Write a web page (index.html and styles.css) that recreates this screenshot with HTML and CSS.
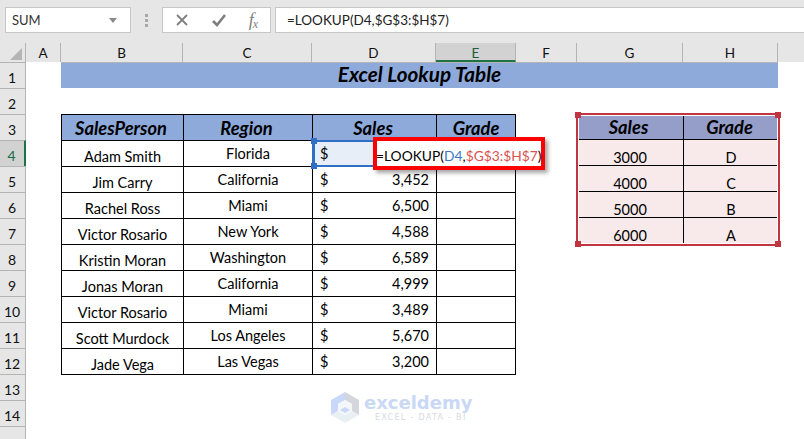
FILE: index.html
```html
<!DOCTYPE html>
<html lang="en">
<head>
<meta charset="utf-8">
<title>Excel Lookup Table</title>
<link rel="stylesheet" href="styles.css">
</head>
<body>
<div class="app">
  <header class="fbar">
    <div class="namebox"><span>SUM</span><svg class="caret" width="8" height="5" viewBox="0 0 8 5"><path d="M0 0h8L4 5z" fill="#8a8a8a"/></svg></div>
    <div class="grip"><i></i><i></i><i></i></div>
    <div class="btns">
      <svg width="14" height="14" viewBox="0 0 14 14"><path d="M2 2l10 10M12 2L2 12" stroke="#7f7f7f" stroke-width="1.8" fill="none"/></svg>
      <svg width="14" height="14" viewBox="0 0 14 14"><path d="M1 8l4 4 8-10" stroke="#7f7f7f" stroke-width="2.6" fill="none"/></svg>
      <span class="fx">f<sub>x</sub></span>
    </div>
    <div class="finput">=LOOKUP(D4,$G$3:$H$7)</div>
  </header>
  <main class="sheet">
    <div class="corner"><svg width="12" height="12" viewBox="0 0 12 12"><path d="M12 0v12H0z" fill="#b4b4b4"/></svg></div>
    <div class="col">A</div><div class="col">B</div><div class="col">C</div><div class="col">D</div><div class="col col-on">E</div><div class="col">F</div><div class="col">G</div><div class="col">H</div><div class="col-end"></div>

    <div class="row">1</div><div class="blank"></div><div class="title">Excel Lookup Table</div><div class="blank"></div>
    <div class="row">2</div><div class="blank full"></div>

    <div class="row">3</div><div class="blank"></div>
    <div class="th">SalesPerson</div><div class="th">Region</div><div class="th">Sales</div><div class="th last">Grade</div>
    <div class="blank"></div><div class="lh">Sales</div><div class="lh">Grade</div><div class="blank"></div>

    <div class="row row-on">4</div><div class="blank"></div>
    <div class="td name">Adam Smith</div><div class="td mid">Florida</div><div class="td money sel"><span>$</span></div><div class="td last"></div>
    <div class="blank"></div><div class="ld">3000</div><div class="ld">D</div><div class="blank"></div>

    <div class="row">5</div><div class="blank"></div>
    <div class="td name">Jim Carry</div><div class="td mid">California</div><div class="td money"><span>$</span><span>3,452</span></div><div class="td last"></div>
    <div class="blank"></div><div class="ld">4000</div><div class="ld">C</div><div class="blank"></div>

    <div class="row">6</div><div class="blank"></div>
    <div class="td name">Rachel Ross</div><div class="td mid">Miami</div><div class="td money"><span>$</span><span>6,500</span></div><div class="td last"></div>
    <div class="blank"></div><div class="ld">5000</div><div class="ld">B</div><div class="blank"></div>

    <div class="row">7</div><div class="blank"></div>
    <div class="td name">Victor Rosario</div><div class="td mid">New York</div><div class="td money"><span>$</span><span>4,588</span></div><div class="td last"></div>
    <div class="blank"></div><div class="ld lastl">6000</div><div class="ld lastl">A</div><div class="blank"></div>

    <div class="row">8</div><div class="blank"></div>
    <div class="td name">Kristin Moran</div><div class="td mid">Washington</div><div class="td money"><span>$</span><span>6,589</span></div><div class="td last"></div><div class="blank rest"></div>

    <div class="row">9</div><div class="blank"></div>
    <div class="td name">Jonas Moran</div><div class="td mid">California</div><div class="td money"><span>$</span><span>4,999</span></div><div class="td last"></div><div class="blank rest"></div>

    <div class="row">10</div><div class="blank"></div>
    <div class="td name">Victor Rosario</div><div class="td mid">Miami</div><div class="td money"><span>$</span><span>3,489</span></div><div class="td last"></div><div class="blank rest"></div>

    <div class="row">11</div><div class="blank"></div>
    <div class="td name">Scott Murdock</div><div class="td mid">Los Angeles</div><div class="td money"><span>$</span><span>5,670</span></div><div class="td last"></div><div class="blank rest"></div>

    <div class="row">12</div><div class="blank"></div>
    <div class="td name end">Jade Vega</div><div class="td mid end">Las Vegas</div><div class="td money end"><span>$</span><span>3,200</span></div><div class="td last end"></div><div class="blank rest"></div>

    <div class="row">13</div><div class="blank full"></div>
    <div class="row">14</div><div class="blank full"></div>
    <div class="row"></div><div class="blank full"></div>

    <div class="selbox"><i class="h tl"></i><i class="h bl"></i></div>
    <div class="fbox">=LOOKUP(<span class="ref1">D4</span>,<span class="ref2">$G$3:$H$7</span>)</div>
    <div class="range"><i class="rh rtl"></i><i class="rh rtr"></i><i class="rh rbl"></i><i class="rh rbr"></i></div>

    <div class="mark">
      <svg width="28" height="31" viewBox="0 0 28 31">
        <path d="M14 0L0 8v15l7-4V12l7-4z" fill="#c9d8fa"/>
        <path d="M14 0l14 8v15l-7-4V12l-7-4z" fill="#d3d6db"/>
        <path d="M0 23l14 8 14-8-7-4-7 4-7-4z" fill="#e8f0f4"/>
        <path d="M7 12l7-4 7 4v7l-7 4-7-4z" fill="#f4f6f9"/>
        <path d="M9 18l5-3 5 3-5 3z" fill="#c9d8fa"/>
      </svg>
      <div class="mark-t"><div class="mark-a">exceldemy</div><div class="mark-b">EXCEL - DATA - BI</div></div>
    </div>
  </main>
</div>
</body>
</html>
```
FILE: styles.css
```css
* { box-sizing: border-box; }
html, body { margin: 0; padding: 0; }
body { width: 804px; height: 439px; overflow: hidden; background: #fff; font-family: Lato, "Open Sans", sans-serif; color: #000; }
.app { width: 804px; height: 439px; display: flex; flex-direction: column; overflow: hidden; }

.fbar { height: 43px; flex: none; background: #e6e6e6; display: flex; align-items: flex-start; padding: 7px 0 0 5px; }
.namebox { width: 126px; height: 26px; background: #fff; border: 1px solid #c6c6c6; display: flex; align-items: center; justify-content: space-between; padding: 0 13px 0 6px; font-size: 13px; color: #333; }
.grip { width: 31px; height: 26px; display: flex; flex-direction: column; align-items: center; justify-content: center; gap: 2px; }
.grip i { width: 3px; height: 3px; background: #a8a8a8; }
.btns { width: 109px; height: 26px; background: #fff; border: 1px solid #c6c6c6; display: flex; align-items: center; justify-content: space-between; padding: 0 12px 0 12px; }
.fx { font-family: "Liberation Serif", serif; font-style: italic; font-size: 18px; color: #7f7f7f; line-height: 1; }
.fx sub { font-size: 12px; vertical-align: -2px; line-height: 0; margin-left: -1px; }
.finput { margin-left: 4px; flex: 1; height: 26px; background: #fff; border: 1px solid #c6c6c6; border-right: 0; padding: 0 0 0 11px; font-size: 13.5px; line-height: 24px; color: #222; }

.sheet { position: relative; flex: 1; display: grid; grid-template-columns: 26px 35px 122px 129px 124px 80px 61px 106px 95px 26px; grid-template-rows: 19px repeat(14, 26px) 13px; }
.corner { background: #e6e6e6; border-right: 1px solid #b4b4b4; display: flex; align-items: flex-end; justify-content: flex-end; padding: 0 3px 2px 0; }
.col { background: #e6e6e6; border-right: 1px solid #b4b4b4; text-align: center; font-size: 13.5px; line-height: 20px; color: #111; }
.col-on { background: #d2d2d2; border-bottom: 2px solid #217346; color: #1d5c3a; }
.col-end { background: #e6e6e6; }
.row { background: #e6e6e6; border-top: 1px solid #b4b4b4; border-right: 1px solid #b4b4b4; text-align: center; font-size: 14px; line-height: 30px; padding-right: 1px; color: #111; }
.row-on { background: #d2d2d2; border-right: 2px solid #217346; color: #1d6b44; }
.blank { background: #fff; }
.blank.full { grid-column: 2 / -1; }
.blank.rest { grid-column: 7 / -1; }
.title { grid-column: 3 / 10; background: #8eaadb; border-top: 1px solid #b4b4b4; text-align: center; font-size: 20.7px; font-weight: 700; font-style: italic; line-height: 23px; height: 27px; }

.th { background: #8eaadb; border-left: 1px solid #000; border-top: 1px solid #000; padding-right: 3px; text-align: center; font-size: 18.3px; font-weight: 700; font-style: italic; line-height: 26px; }
.th.last { padding-right: 0; }
.td { border-left: 1px solid #000; border-top: 1px solid #000; font-size: 14.5px; text-align: center; background: #fff; }
.last { border-right: 1px solid #000; }
.end { position: relative; box-shadow: 0 1px 0 #000; }
.name { padding-top: 2px; line-height: 27px; }
.mid { line-height: 25px; }
.money { display: flex; justify-content: space-between; padding: 0 7px; line-height: 25px; }

.lh { background: #959dc9; border-bottom: 1px solid #000; padding-right: 3px; text-align: center; font-size: 18.3px; font-weight: 700; font-style: italic; line-height: 26px; }
.lh + .lh, .ld + .ld { border-left: 1px solid #000; }
.ld { background: #f8eaea; border-bottom: 1px solid #000; padding-top: 4px; text-align: center; font-size: 14.5px; line-height: 27px; }
.lastl { border-bottom: 0; }

.sel { background: #e8eef8; }

.selbox { position: absolute; left: 312px; top: 97px; width: 125px; height: 27px; border: 2px solid #2f6fc6; border-left-width: 3px; pointer-events: none; }
.h { position: absolute; width: 6px; height: 6px; background: #2f6fc6; left: -4px; }
.tl { top: -4px; }
.bl { bottom: -4px; }

.fbox { position: absolute; left: 373px; top: 94px; width: 172px; height: 33px; background: #fff; border: 4px solid #f00; box-shadow: 3px 3px 4px rgba(0,0,0,.35); font-size: 13.8px; line-height: 30px; text-indent: -1px; white-space: nowrap; }
.ref1 { color: #3a78c4; }
.ref2 { color: #d9534f; }

.range { position: absolute; left: 576px; top: 70px; width: 204px; height: 133px; border: 2px solid #c0353f; pointer-events: none; }
.range::before { content: ""; position: absolute; inset: 0; border: 1px solid #fff; }
.rh { position: absolute; width: 6px; height: 6px; background: #c0353f; }
.rtl { left: -3px; top: -3px; }
.rtr { right: -3px; top: -3px; }
.rbl { left: -3px; bottom: -3px; }
.rbr { right: -3px; bottom: -3px; }

.mark { position: absolute; left: 331px; top: 349px; display: flex; gap: 5px; align-items: flex-start; pointer-events: none; }
.mark-t { display: flex; flex-direction: column; }
.mark-a { font-family: "DejaVu Sans", sans-serif; font-weight: 700; font-size: 18px; line-height: 21px; color: #c9d8f4; }
.mark-b { font-family: "DejaVu Sans", sans-serif; font-size: 8px; line-height: 9px; letter-spacing: 1.3px; color: #d6dade; padding-left: 11px; white-space: nowrap; }
```
